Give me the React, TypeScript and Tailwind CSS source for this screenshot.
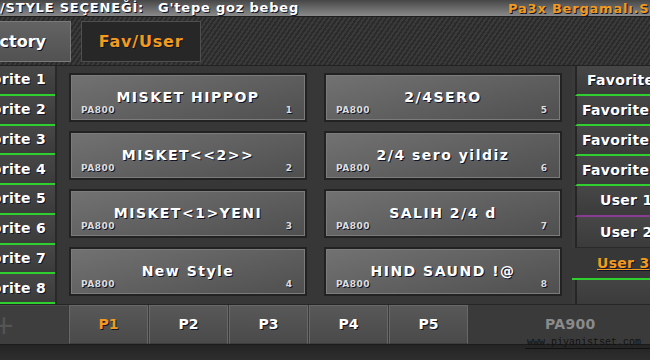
import React from 'react'

const styles = [
  { name: 'MISKET HIPPOP', n: 1 },
  { name: 'MISKET<<2>>', n: 2 },
  { name: 'MISKET<1>YENI', n: 3 },
  { name: 'New Style', n: 4 },
  { name: '2/4SERO', n: 5 },
  { name: '2/4 sero yildiz', n: 6 },
  { name: 'SALIH 2/4 d', n: 7 },
  { name: 'HIND SAUND !@', n: 8 },
]

const leftBanks = ['Favorite 1', 'Favorite 2', 'Favorite 3', 'Favorite 4', 'Favorite 5', 'Favorite 6', 'Favorite 7', 'Favorite 8']

const shadow = '[text-shadow:1px_1px_0_#10142a]'

function StyleButton({ name, n }: { name: string; n: number }) {
  return (
    <div className="relative flex items-center justify-center border-2 border-[#222] shadow-[inset_0_0_0_1px_#7b7b7b] bg-[linear-gradient(165deg,#727272,#4f4f4f)]">
      <span className={`text-[14px] font-bold tracking-[1.5px] text-white ${shadow} whitespace-nowrap`}>{name}</span>
      {/* bank tag + slot number */}
      <span className={`absolute left-[10px] bottom-[3px] text-[9px] font-bold tracking-[0.5px] text-[#ddd] ${shadow}`}>PA800</span>
      <span className={`absolute right-[13px] bottom-[3px] text-[9px] font-bold text-[#ddd] ${shadow}`}>{n}</span>
    </div>
  )
}

export default function App() {
  return (
    <div className="relative w-[650px] h-[360px] overflow-hidden flex flex-col bg-[#3a3a3a] font-['DejaVu_Sans',sans-serif]">
      {/* title bar */}
      <div className="h-[17px] flex items-center bg-[linear-gradient(to_bottom,#464646,#8a8a8a)] border-b border-[#1e1e1e] whitespace-nowrap">
        <div className="w-[508px] flex items-center">
          <span className={`text-[13px] font-bold tracking-[0.8px] text-white ${shadow}`}>/STYLE SEÇENEĞİ:</span>
          <span className={`ml-[14px] text-[13px] font-bold tracking-[0.8px] text-white ${shadow}`}>G'tepe goz bebeg</span>
        </div>
        <div className="flex-1 min-w-0 overflow-hidden">
          <span className={`text-[13px] font-bold tracking-[0.8px] text-[#f39a1e] ${shadow}`}>Pa3x Bergamalı.Sl</span>
        </div>
      </div>

      {/* category tabs */}
      <div className="h-[49px] flex items-start pt-[4px] gap-[10px] bg-[repeating-linear-gradient(125deg,#2b2b2b_0px,#2b2b2b_2px,#3a3a3a_2px,#3a3a3a_4px)] border-b border-[#222]">
        <div className="w-[71px] h-[41px] flex items-center justify-end pr-[24px] overflow-hidden whitespace-nowrap bg-[linear-gradient(to_bottom,#636363,#525252)] border border-[#7a7a7a] border-l-0">
          <span className={`text-[16px] font-bold text-white ${shadow}`}>Factory</span>
        </div>
        <div className="w-[120px] h-[41px] flex items-center justify-center bg-[#272727] border border-[#4f4f4f]">
          <span className={`text-[16px] font-bold tracking-[0.8px] text-[#f39a1e] ${shadow}`}>Fav/User</span>
        </div>
      </div>

      {/* main area */}
      <div className="h-[238px] flex">
        <div className="w-[57px] flex flex-col border-r-2 border-[#292929]">
          {leftBanks.map((b) => (
            <div
              key={b}
              className="flex-1 flex items-center justify-end pr-[9px] overflow-hidden whitespace-nowrap bg-[linear-gradient(to_bottom,#474747,#3b3b3b)] border-b-2 border-[#2fcf2f] shadow-[0_1px_0_#2a2a2a]"
            >
              <span className={`text-[14px] font-bold tracking-[0.3px] text-white ${shadow}`}>{b}</span>
            </div>
          ))}
        </div>

        <div className="flex-1 grid grid-cols-2 grid-rows-4 grid-flow-col gap-x-[17px] gap-y-[9px] pl-[12px] pr-[10px] pt-[7px] pb-[8px] bg-[#373737]">
          {styles.map((s) => (
            <StyleButton key={s.n} name={s.name} n={s.n} />
          ))}
        </div>

        <div className="w-[78px] flex flex-col whitespace-nowrap">
          {['Favorite 1', 'Favorite 2', 'Favorite 3', 'Favorite 4'].map((f, i) => (
            <div
              key={f}
              className={`h-[30px] ml-[3px] flex items-center ${i === 0 ? 'pl-[10px]' : 'pl-[5px]'} overflow-hidden bg-[linear-gradient(to_bottom,#474747,#3b3b3b)] border-l-2 border-[#262626] border-b-2 border-b-[#2fcf2f]`}
            >
              <span className={`text-[14px] font-bold tracking-[0.3px] text-white ${shadow}`}>{f}</span>
            </div>
          ))}
          <div className="h-[31px] ml-[3px] flex items-center pl-[23px] overflow-hidden bg-[linear-gradient(to_bottom,#474747,#3b3b3b)] border-l-2 border-[#262626] border-b-2 border-b-[#8a3c92]">
            <span className={`text-[14px] font-bold tracking-[0.3px] text-white ${shadow}`}>User 1</span>
          </div>
          <div className="h-[31px] ml-[3px] flex items-center pl-[23px] overflow-hidden bg-[linear-gradient(to_bottom,#474747,#3b3b3b)] border-l-2 border-[#262626] border-b border-b-[#2a2a2a]">
            <span className={`text-[14px] font-bold tracking-[0.3px] text-white ${shadow}`}>User 2</span>
          </div>
          <div className="h-[32px] flex items-center pl-[25px] overflow-hidden bg-[#373737] border-b-2 border-b-[#2fcf2f]">
            <span className={`text-[14px] font-bold tracking-[0.3px] text-[#f39a1e] underline ${shadow}`}>User 3</span>
          </div>
          <div className="flex-1 ml-[3px] bg-[linear-gradient(to_bottom,#444,#3b3b3b)] border-l-2 border-[#262626]" />
        </div>
      </div>

      {/* page tabs */}
      <div className="h-[40px] flex border-t border-[#262626]">
        <div className="w-[68px] flex items-center overflow-hidden bg-[#3e3e3e] border-t border-[#4c4c4c]">
          <span className="-ml-[7px] text-[26px] leading-none text-[#555]">+</span>
        </div>
        {['P1', 'P2', 'P3', 'P4', 'P5'].map((p, i) => (
          <div
            key={p}
            className="w-[79px] ml-[1px] flex items-center justify-center bg-[linear-gradient(to_bottom,#585858,#4a4a4a)] border border-[#686868] border-b-[#3d3d3d]"
          >
            <span className={`text-[14px] font-bold ${i === 0 ? 'text-[#f39a1e]' : 'text-white'} ${shadow}`}>{p}</span>
          </div>
        ))}
        <div className="flex-1 flex items-center pl-[77px] bg-[#3a3a3a]">
          <span className="text-[14px] font-bold tracking-[0.3px] text-[#8a8a8a]">PA900</span>
        </div>
      </div>

      <div className="flex-1 bg-[linear-gradient(to_bottom,#242424,#2e2e2e)] border-t border-[#1b1b1b]" />

      {/* site watermark */}
      <div className="absolute left-[525px] right-0 top-[337px] border-b border-[#111] pl-[2px] text-[10px] leading-[11px] font-['Liberation_Mono',monospace] text-[#111]">
        www.piyanistset.com
      </div>
    </div>
  )
}
